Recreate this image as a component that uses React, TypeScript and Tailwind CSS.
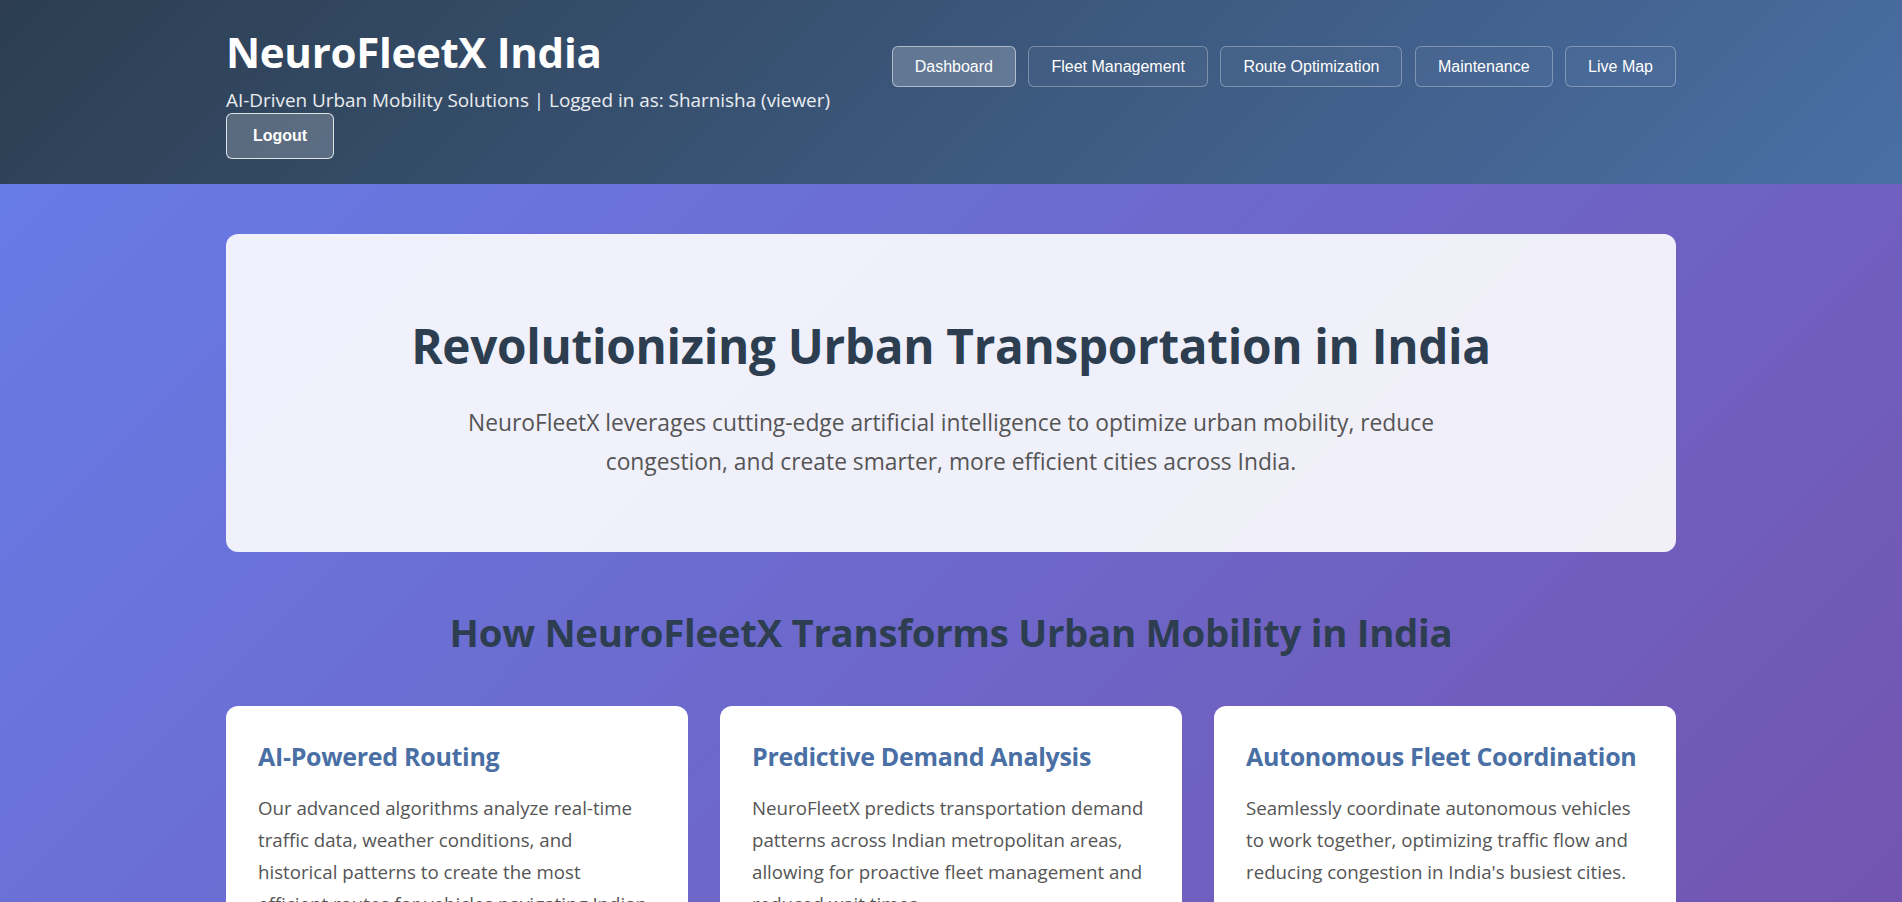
import * as React from "react";

const NAV = ["Dashboard", "Fleet Management", "Route Optimization", "Maintenance", "Live Map"];

const FEATURES = [
  {
    title: "AI-Powered Routing",
    body: "Our advanced algorithms analyze real-time traffic data, weather conditions, and historical patterns to create the most efficient routes for vehicles navigating Indian cities.",
  },
  {
    title: "Predictive Demand Analysis",
    body: "NeuroFleetX predicts transportation demand patterns across Indian metropolitan areas, allowing for proactive fleet management and reduced wait times.",
  },
  {
    title: "Autonomous Fleet Coordination",
    body: "Seamlessly coordinate autonomous vehicles to work together, optimizing traffic flow and reducing congestion in India's busiest cities.",
  },
];

const sans = "font-['Open_Sans','Noto_Sans',sans-serif]";
const arial = "font-['Liberation_Sans',Arial,sans-serif]";

export default function App() {
  return (
    <div className={`min-h-[1574px] bg-[linear-gradient(135deg,#667eea_0%,#764ba2_100%)] ${sans}`}>
      <header className="bg-[linear-gradient(135deg,#2c3e50_0%,#4a6fa5_100%)] text-white">
        <div className="mx-auto flex w-[1450px] items-start justify-between pt-[27px] pb-[25px]">
          <div>
            <h1 className="text-[42px] font-bold leading-[50px] tracking-[-0.3px]">NeuroFleetX India</h1>
            <p className="mt-[10px] text-[18.9px] leading-[26px] text-white/90">
              AI-Driven Urban Mobility Solutions | Logged in as: Sharnisha (viewer)
            </p>
            <button
              type="button"
              className={`h-[46px] w-[108px] rounded-[6px] border border-white/80 bg-white/20 text-[16px] font-bold text-white ${arial}`}
            >
              Logout
            </button>
          </div>
          <nav className="mt-[19px] flex gap-[12.5px]">
            {NAV.map((item, i) => (
              <button
                key={item}
                type="button"
                className={`h-[41px] rounded-[6px] border px-[22px] text-[16px] text-white ${arial} ${
                  i === 0 ? "border-white/50 bg-white/20" : "border-white/30 bg-white/[0.03]"
                }`}
              >
                {item}
              </button>
            ))}
          </nav>
        </div>
      </header>

      <main className="mx-auto w-[1450px] pt-[50px] pb-12">
        <section className="flex h-[318px] flex-col items-center rounded-[12px] bg-white/90 pt-[84px] text-center">
          <h2 className="text-[47.7px] font-bold leading-[56px] tracking-[-0.3px] text-[#2c3e50]">
            Revolutionizing Urban Transportation in India
          </h2>
          <p className="mt-[29px] max-w-[1000px] text-[22.8px] leading-[39px] text-[#555]">
            NeuroFleetX leverages cutting-edge artificial intelligence to optimize urban mobility, reduce congestion, and
            create smarter, more efficient cities across India.
          </p>
        </section>

        <h2 className="mt-[56px] text-center text-[38.4px] font-bold leading-[48px] tracking-[-0.3px] text-[#2c3e50]">
          How NeuroFleetX Transforms Urban Mobility in India
        </h2>

        <div className="mt-[50px] grid grid-cols-3 gap-[32px]">
          {FEATURES.map((f) => (
            <div key={f.title} className="rounded-[12px] bg-white px-[32px] pt-[32px] pb-[32px]">
              <h3 className="whitespace-nowrap text-[25px] font-bold leading-[36px] tracking-[-0.3px] text-[#4a6fa5]">
                {f.title}
              </h3>
              <p className="mt-[18px] pr-[4px] text-[18.7px] leading-[32px] text-[#555]">{f.body}</p>
            </div>
          ))}
        </div>
      </main>
    </div>
  );
}
